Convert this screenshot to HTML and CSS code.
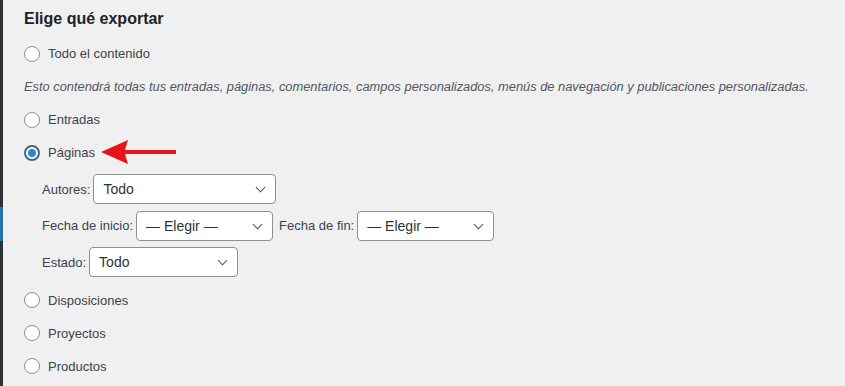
FILE: index.html
```html
<!DOCTYPE html>
<html lang="es">

<head>
    <meta charset="UTF-8">
    <meta name="viewport" content="width=device-width, initial-scale=1.0">
    <title>Exportar</title>
    <link rel="stylesheet" href="styles.css">
</head>

<body>
    <div class="page">
        <!-- barra lateral -->
        <div class="side-strip"><span class="current"></span></div>

        <div class="export">
            <h2>Elige qué exportar</h2>
            <ul class="options">
                <li><span class="radio"></span>Todo el contenido</li>
                <li class="desc">Esto contendrá todas tus entradas, páginas, comentarios, campos personalizados, menús de navegación y publicaciones personalizadas.</li>
                <li><span class="radio"></span>Entradas</li>
                <li>
                    <span class="radio checked"></span>Páginas
                    <svg class="arrow" width="80" height="26" viewBox="0 0 80 26">
                        <path d="M0 13 L27 1 L24 11 L75 11 L75 15 L24 15 L27 25 Z" fill="#e5141b" />
                    </svg>
                </li>
            </ul>

            <div class="filters">
                <div class="row">
                    <label>Autores:</label>
                    <div class="select w-autores">Todo</div>
                </div>
                <div class="row">
                    <label>Fecha de inicio:</label>
                    <div class="select w-fecha">— Elegir —</div>
                    <label>Fecha de fin:</label>
                    <div class="select w-fecha">— Elegir —</div>
                </div>
                <div class="row">
                    <label>Estado:</label>
                    <div class="select w-estado">Todo</div>
                </div>
            </div>

            <ul class="options">
                <li><span class="radio"></span>Disposiciones</li>
                <li><span class="radio"></span>Proyectos</li>
                <li><span class="radio"></span>Productos</li>
            </ul>
        </div>
    </div>
</body>

</html>
```

FILE: styles.css
```css
* {
    padding: 0;
    margin: 0;
    list-style: none;
    box-sizing: border-box;
}

body {
    background-color: #f0f0f1;
    font-family: "Liberation Sans", Arial, sans-serif;
    font-size: 13px;
    color: #3c434a;
}

.page {
    display: flex;
    height: 386px;
    overflow: hidden;
}

.side-strip {
    width: 3px;
    background-color: #2c3338;
    flex-shrink: 0;
    padding-top: 207px;
}

.side-strip .current {
    display: block;
    height: 34px;
    background-color: #2271b1;
}

.export {
    padding-left: 21px;
    flex: 1;
}

.export h2 {
    font-size: 16px;
    font-weight: 600;
    color: #1d2327;
    line-height: 37px;
}

.options li {
    height: 33px;
    display: flex;
    align-items: center;
    position: relative;
}

.options li.desc {
    font-style: italic;
    font-size: 12.85px;
    color: #50575e;
}

.radio {
    width: 16px;
    height: 16px;
    border: 1px solid #8c8f94;
    border-radius: 50%;
    background-color: #fff;
    margin-right: 8px;
    display: flex;
    align-items: center;
    justify-content: center;
}

.radio.checked {
    border: 2px solid #3d6a86;
}

.radio.checked::before {
    content: "";
    width: 8px;
    height: 8px;
    border-radius: 50%;
    background-color: #3582c4;
}

.arrow {
    position: absolute;
    left: 77px;
    top: 3px;
}

.filters {
    padding: 5px 0 0 18px;
}

.filters .row {
    display: flex;
    align-items: center;
    height: 30px;
    margin-bottom: 6.5px;
}

.filters label {
    margin-right: 3px;
}

.select {
    height: 30px;
    border: 1px solid #8c8f94;
    border-radius: 4px;
    background-color: #fff;
    font-size: 14px;
    color: #2c3338;
    padding-left: 9px;
    display: flex;
    align-items: center;
    position: relative;
    margin-right: 6px;
}

.select::after {
    content: "";
    position: absolute;
    right: 11px;
    top: 9px;
    width: 6px;
    height: 6px;
    border-right: 1.5px solid #50575e;
    border-bottom: 1.5px solid #50575e;
    transform: rotate(45deg);
}

.w-autores {
    width: 183px;
}

.w-fecha {
    width: 137px;
}

.w-estado {
    width: 149px;
}
```
